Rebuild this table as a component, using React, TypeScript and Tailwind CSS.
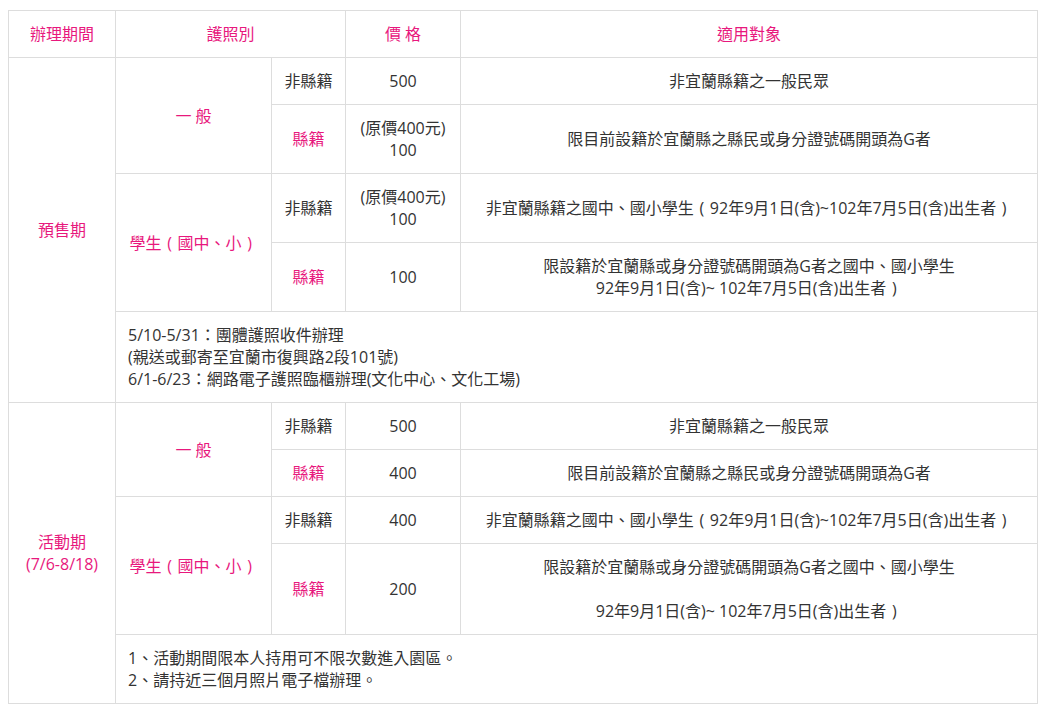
const pink = "text-[#e8187d]";

const td = "border border-[#dddddd] px-3 py-3 text-center align-middle";

// full-width bracket drawn centred in its em box, as the source font does
function FW({ ch }: { ch: string }) {
  return <span className="inline-block w-[1em] text-center">{ch}</span>;
}

const Student = () => (
  <>
    學生<FW ch="(" />國中、小<FW ch=")" />
  </>
);

const NonLocalStudent = () => (
  <>
    非宜蘭縣籍之國中、國小學生<FW ch="(" />92年9月1日(含)~102年7月5日(含)出生者<FW ch=")" />
  </>
);

export default function App() {
  return (
    <div className="bg-white pl-2 pt-[10px] pb-3 pr-2 text-[16px] leading-[22px] text-[#333333] [font-family:'Open_Sans','Noto_Sans_CJK_TC',sans-serif]">
      <table className="w-[1030px] table-fixed border-collapse">
        <colgroup>
          <col className="w-[107px]" />
          <col className="w-[156px]" />
          <col className="w-[74px]" />
          <col className="w-[115px]" />
          <col />
        </colgroup>
        <thead>
          <tr>
            <th className={`${td} font-normal ${pink}`}>辦理期間</th>
            <th className={`${td} font-normal ${pink}`} colSpan={2}>護照別</th>
            <th className={`${td} font-normal ${pink}`}>價 格</th>
            <th className={`${td} font-normal ${pink}`}>適用對象</th>
          </tr>
        </thead>
        <tbody>
          <tr>
            <td className={`${td} ${pink}`} rowSpan={5}>預售期</td>
            <td className={`${td} ${pink}`} rowSpan={2}>一 般</td>
            <td className={td}>非縣籍</td>
            <td className={td}>500</td>
            <td className={td}>非宜蘭縣籍之一般民眾</td>
          </tr>
          <tr>
            <td className={`${td} ${pink}`}>縣籍</td>
            <td className={td}>
              (原價400元)
              <br />
              100
            </td>
            <td className={td}>限目前設籍於宜蘭縣之縣民或身分證號碼開頭為G者</td>
          </tr>
          <tr>
            <td className={`${td} ${pink}`} rowSpan={2}>
              <Student />
            </td>
            <td className={td}>非縣籍</td>
            <td className={td}>
              (原價400元)
              <br />
              100
            </td>
            <td className={td}>
              <NonLocalStudent />
            </td>
          </tr>
          <tr>
            <td className={`${td} ${pink}`}>縣籍</td>
            <td className={td}>100</td>
            <td className={td}>
              限設籍於宜蘭縣或身分證號碼開頭為G者之國中、國小學生
              <br />
              92年9月1日(含)~ 102年7月5日(含)出生者<FW ch=")" />
            </td>
          </tr>
          <tr>
            <td className={`${td} text-left`} colSpan={4}>
              5/10-5/31：團體護照收件辦理
              <br />
              (親送或郵寄至宜蘭市復興路2段101號)
              <br />
              6/1-6/23：網路電子護照臨櫃辦理(文化中心、文化工場)
            </td>
          </tr>

          <tr>
            <td className={`${td} ${pink}`} rowSpan={5}>
              活動期
              <br />
              (7/6-8/18)
            </td>
            <td className={`${td} ${pink}`} rowSpan={2}>一 般</td>
            <td className={td}>非縣籍</td>
            <td className={td}>500</td>
            <td className={td}>非宜蘭縣籍之一般民眾</td>
          </tr>
          <tr>
            <td className={`${td} ${pink}`}>縣籍</td>
            <td className={td}>400</td>
            <td className={td}>限目前設籍於宜蘭縣之縣民或身分證號碼開頭為G者</td>
          </tr>
          <tr>
            <td className={`${td} ${pink}`} rowSpan={2}>
              <Student />
            </td>
            <td className={td}>非縣籍</td>
            <td className={td}>400</td>
            <td className={td}>
              <NonLocalStudent />
            </td>
          </tr>
          <tr>
            <td className={`${td} ${pink}`}>縣籍</td>
            <td className={td}>200</td>
            <td className={td}>
              限設籍於宜蘭縣或身分證號碼開頭為G者之國中、國小學生
              <br />
              <br />
              92年9月1日(含)~ 102年7月5日(含)出生者<FW ch=")" />
            </td>
          </tr>
          <tr>
            <td className={`${td} text-left`} colSpan={4}>
              1、活動期間限本人持用可不限次數進入園區。
              <br />
              2、請持近三個月照片電子檔辦理。
            </td>
          </tr>
        </tbody>
      </table>
    </div>
  );
}
